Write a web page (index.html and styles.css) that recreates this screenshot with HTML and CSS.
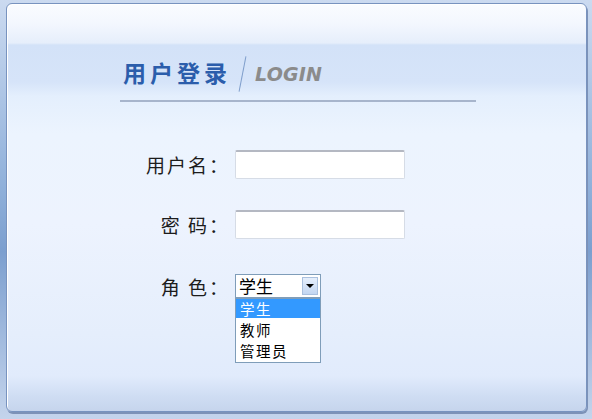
FILE: index.html
```html
<!DOCTYPE html>
<html lang="zh-CN">
  <head>
    <meta charset="UTF-8" />
    <title>用户登录</title>
    <link rel="stylesheet" href="styles.css">
  </head>
  <body>
    <div class="panel">
      <div class="title-bar">
        <h1 class="title-cn">用户登录</h1>
        <span class="slash"></span>
        <span class="title-en">LOGIN</span>
      </div>

      <form class="login-form">
        <div class="form-row">
          <label for="username">用户名：</label>
          <input type="text" id="username" />
        </div>

        <div class="form-row">
          <label for="password">密 码：</label>
          <input type="password" id="password" />
        </div>

        <div class="form-row row-role">
          <label>角 色：</label>
          <div class="select">
            <span class="select-value">学生</span>
            <span class="select-btn"><i class="arrow"></i></span>
            <ul class="select-list">
              <li class="active">学生</li>
              <li>教师</li>
              <li>管理员</li>
            </ul>
          </div>
        </div>
      </form>
    </div>
  </body>
</html>
```

FILE: styles.css
```css
* {
  margin: 0;
  padding: 0;
  box-sizing: border-box;
}

html,
body {
  height: 100%;
}

body {
  padding: 3px 5px 7px 6px;
  background: linear-gradient(#cbdaf0 0%, #8fb0da 45%, #7c9fcf 60%, #c4d4ec 100%);
  font-family: "Noto Sans CJK SC", "DejaVu Sans", sans-serif;
  overflow: hidden;
}

.panel {
  height: 409px;
  border: 1px solid #7893bf;
  border-radius: 6px;
  box-shadow: inset 1px 1px 0 #ffffff, 1px 2px 0 #7d92b7;
  background: linear-gradient(
    #fafcff 0px,
    #f3f7fe 20px,
    #e6eefb 39px,
    #d3e2f8 41px,
    #d6e4f9 78px,
    #e4effd 92px,
    #ecf4fe 130px,
    #edf3fe 220px,
    #e5eefc 330px,
    #e1ebfc 372px,
    #cfddf3 392px,
    #c5d4ec 408px
  );
}

.title-bar {
  display: flex;
  align-items: center;
  width: 356px;
  height: 98px;
  margin-left: 113px;
  padding: 40px 0 0 3px;
  border-bottom: 2px solid #a7b5cc;
}

.title-cn {
  font-size: 23px;
  font-weight: bold;
  color: #2b5dab;
  letter-spacing: 4px;
  line-height: 30px;
}

.slash {
  display: inline-block;
  width: 1px;
  height: 36px;
  margin: 3px 12px 0 11px;
  background-color: #7f9ecb;
  transform: rotate(11deg);
}

.title-en {
  font-family: "DejaVu Sans", sans-serif;
  font-size: 19px;
  font-weight: bold;
  font-style: italic;
  color: #8b8b8b;
  letter-spacing: 0.2px;
  margin-top: 3px;
}

.login-form {
  display: flex;
  flex-direction: column;
  gap: 30px;
  padding-top: 47px;
  margin-left: 133px;
}

.form-row {
  display: flex;
  align-items: center;
  height: 30px;
}

.row-role {
  margin-top: 2px;
}

label {
  width: 90px;
  margin-right: 5px;
  text-align: right;
  font-size: 19px;
  letter-spacing: 2px;
  color: #1c1c1c;
}

input {
  width: 170px;
  height: 29px;
  border: 1px solid #d6dce6;
  border-top: 2px solid #b4b8c2;
  border-radius: 2px;
  background-color: #ffffff;
  font-size: 14px;
  padding: 0 4px;
}

.select {
  position: relative;
  display: flex;
  align-items: center;
  justify-content: space-between;
  width: 86px;
  height: 24px;
  border: 1px solid #7f9db9;
  background-color: #ffffff;
  padding: 0 2px 0 3px;
}

.select-value {
  font-size: 17px;
  line-height: 20px;
  color: #000;
}

.select-btn {
  display: flex;
  align-items: center;
  justify-content: center;
  width: 16px;
  height: 18px;
  border: 1px solid #aac0de;
  background: linear-gradient(#e6effc, #c3d6f1);
}

.arrow {
  width: 0;
  height: 0;
  border-left: 4px solid transparent;
  border-right: 4px solid transparent;
  border-top: 4px solid #000;
}

.select-list {
  position: absolute;
  top: 23px;
  left: -1px;
  width: 86px;
  list-style: none;
  border: 1px solid #7f9db9;
  background-color: #ffffff;
  padding-bottom: 1px;
}

.select-list li {
  height: 21px;
  padding-left: 4px;
  font-size: 14.5px;
  letter-spacing: 1.5px;
  line-height: 21px;
  color: #000;
}

.select-list li.active {
  height: 19px;
  line-height: 19px;
  margin-bottom: 1px;
  background-color: #3399ff;
  color: #ffffff;
}
```
